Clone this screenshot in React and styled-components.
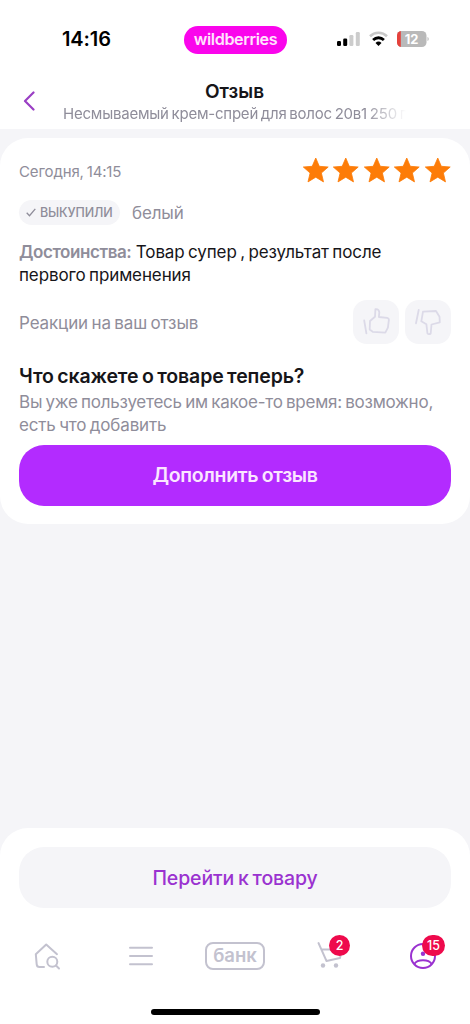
import React from 'react';
import styled, { createGlobalStyle } from 'styled-components';

const GlobalStyle = createGlobalStyle`
  * {
    box-sizing: border-box;
  }
  body {
    margin: 0;
    background: #f5f5f8;
    font-family: Inter, 'Liberation Sans', sans-serif;
    color: #161519;
  }
  button {
    font-family: inherit;
    border: none;
    padding: 0;
  }
`

const Screen = styled.div`
  width: 470px;
  height: 1024px;
  display: flex;
  flex-direction: column;
  overflow: hidden;
  background: #f5f5f8;
`

// Text

const Text = styled.div`
  font-size: ${props => props.$size || 17}px;
  line-height: ${props => props.$line || 23.5}px;
  font-weight: ${props => props.$weight || 400};
  letter-spacing: ${props => props.$spacing || 0}px;
  word-spacing: -1.2px;
  padding-top: ${props => props.$top || 0}px;
  color: ${props => props.$color || '#8f8d9a'};
  white-space: nowrap;
`

// Header

const Top = styled.header`
  height: 129px;
  flex: none;
  background: #fff;
`

const StatusBar = styled.div`
  height: 78px;
  padding: 2px 41px 0 62px;
  display: grid;
  grid-template-columns: 122px 103px 1fr;
  align-items: center;
`

const Pill = styled.div`
  height: 28px;
  border-radius: 14px;
  background: #fa05ec;
  display: flex;
  align-items: center;
  justify-content: center;
`

const StatusIcons = styled.div`
  display: flex;
  align-items: center;
  justify-content: flex-end;
  gap: 9px;
  padding-bottom: 3px;
`

const TitleBar = styled.div`
  display: grid;
  grid-template-columns: 63px 343px 1fr;
  height: 51px;
`

const Back = styled.button`
  background: none;
  display: flex;
  padding: 13px 0 0 22px;
`

const TitleBlock = styled.div`
  display: flex;
  flex-direction: column;
  align-items: center;
  padding-top: 1px;
`

const Subtitle = styled(Text)`
  width: 100%;
  overflow: hidden;
  mask-image: linear-gradient(90deg, #000 88%, transparent 100%);
`

// Review card

const Card = styled.section`
  flex: none;
  height: 386px;
  margin-top: 9px;
  padding: 21px 19px 18px;
  border-radius: 28px;
  background: #fff;
  display: flex;
  flex-direction: column;
`

const Row = styled.div`
  display: flex;
  flex: none;
  align-items: center;
  justify-content: ${props => props.$between ? 'space-between' : 'flex-start'};
  height: ${props => props.$height}px;
  margin-top: ${props => props.$top || 0}px;
  gap: ${props => props.$gap || 0}px;
`

const Chip = styled.div`
  width: 101px;
  height: 25px;
  border-radius: 12.5px;
  background: #f5f5f8;
  display: flex;
  align-items: center;
  gap: 4px;
  padding-left: 7px;
`

const Stars = styled.div`
  display: flex;
  gap: 3px;
  padding-bottom: 2px;
`

const Review = styled(Text)`
  margin-top: 15.5px;
  b {
    font-weight: 600;
    color: #8f8d9a;
    letter-spacing: -0.42px;
    margin-right: 1px;
  }
`

const Reaction = styled.button`
  width: 46px;
  height: 44px;
  border-radius: 14px;
  background: #f5f5f8;
  display: flex;
  align-items: center;
  justify-content: center;
`

const Button = styled.button`
  width: 100%;
  height: 61px;
  border-radius: 25px;
  background: ${props => props.$primary ? '#b32bff' : '#f5f5f8'};
  color: ${props => props.$primary ? '#fbe6ff' : '#9a32d0'};
  font-size: 19.5px;
  font-weight: ${props => props.$primary ? 600 : 500};
  letter-spacing: ${props => props.$spacing || 0}px;
  word-spacing: -1.2px;
  white-space: nowrap;
`

// Bottom

const Bottom = styled.footer`
  margin-top: auto;
  height: 196px;
  flex: none;
  padding-top: 19px;
  border-radius: 28px 28px 0 0;
  background: #fff;
  display: flex;
  flex-direction: column;
  align-items: center;
`

const ButtonWrap = styled.div`
  width: 432px;
`

const Tabs = styled.nav`
  width: 470px;
  height: 96px;
  display: grid;
  grid-template-columns: repeat(5, 1fr);
  justify-items: center;
  align-items: center;
`

const Tab = styled.div`
  position: relative;
  display: flex;
`

const Badge = styled.span`
  position: absolute;
  top: ${props => props.$y}px;
  left: ${props => props.$x}px;
  width: ${props => props.$width}px;
  height: 21px;
  border-radius: 11px;
  background: #ee0a4c;
  color: #fff;
  font-size: 12.5px;
  font-weight: 500;
  line-height: 21px;
  text-align: center;
`

const Bank = styled.div`
  width: 60px;
  height: 28px;
  border: 2px solid #c3c2cf;
  border-radius: 8px;
  display: flex;
  align-items: center;
  justify-content: center;
`

const HomeBar = styled.div`
  width: 169px;
  height: 6px;
  margin-top: 5px;
  border-radius: 3px;
  background: #000;
`

const Signal = () => (
  <svg width="23" height="16" viewBox="0 0 23 16">
    <rect x="0" y="10" width="4" height="5" rx="1.2" fill="#000" />
    <rect x="6.2" y="7.5" width="4" height="7.5" rx="1.2" fill="#000" />
    <rect x="12.4" y="4" width="4" height="11" rx="1.2" fill="#ccc" />
    <rect x="18.8" y="1" width="4" height="14" rx="1.2" fill="#ccc" />
  </svg>
)

const Wifi = () => (
  <svg width="19" height="16" viewBox="0 0 19 16" fill="none">
    <path d="M1 5.2a12.2 12.2 0 0 1 17 0" stroke="#c8c8c8" strokeWidth="2.6" />
    <path d="M4.1 8.9a7.8 7.8 0 0 1 10.8 0" stroke="#000" strokeWidth="2.8" />
    <path d="M9.5 15l-3-3.1a4.3 4.3 0 0 1 6 0z" fill="#000" />
  </svg>
)

const Battery = () => (
  <svg width="32" height="16" viewBox="0 0 32 16">
    <defs>
      <clipPath id="battery">
        <rect width="29.5" height="16" rx="4.6" />
      </clipPath>
    </defs>
    <g clipPath="url(#battery)">
      <rect width="30" height="16" fill="#b9b9b9" />
      <rect width="3.8" height="16" fill="#e5413c" />
    </g>
    <path d="M30.5 6c1.6.5 1.6 3.5 0 4z" fill="#b9b9b9" />
    <text x="14.6" y="12.7" fontSize="13" fontWeight="700" fill="#fff" textAnchor="middle">12</text>
  </svg>
)

const Star = () => (
  <svg width="27.5" height="26" viewBox="0 0 27.5 26">
    <path d="M13.75 1L17.3 9.3 26.2 10 19.4 16 21.5 24.900 13.750 20.200 6 24.900 8.100 16 1.300 10 10.200 9.300z" fill="#fd7c08" stroke="#fd7c08" strokeWidth=".8" strokeLinejoin="round" />
  </svg>
)

const ThumbUp = () => (
  <svg width="28" height="28" viewBox="0 0 28 28" fill="none" stroke="#dcdae8" strokeWidth="1.8" strokeLinejoin="round" strokeLinecap="round">
    <path d="M2.200 12.500l2.200 12.800" />
    <path d="M8 13l5-4.300.4-7.500c2-.2 3.600.8 3.900 3l-.4 4.800 8.200.8c1.300.2 2 1.300 1.700 2.800l-.9 7-2.600 5-12.600-.8L7.700 21.500z" />
  </svg>
)

const ThumbDown = () => (
  <svg width="28" height="28" viewBox="0 0 28 28" fill="none" stroke="#dcdae8" strokeWidth="1.8" strokeLinejoin="round" strokeLinecap="round">
    <path d="M4.700 2L2 15.300" />
    <path d="M9 3.700l13-.7 3.500 5.800.3 5.500-8.300 2.200-.8 9c-1 .9-2.500.8-3.300-.3l-1-8.900-5.100-3z" />
  </svg>
)

const HomeSearch = () => (
  <svg width="28" height="28" viewBox="0 0 28 28" fill="none" stroke="#c3c2cf" strokeWidth="2" strokeLinecap="round" strokeLinejoin="round">
    <path d="M11 25H6.500a2.800 2.800 0 0 1-2.800-2.600L2.800 12.200 13.200 2.500 24 12.200" />
    <circle cx="19.300" cy="19.800" r="5" />
    <path d="M23 23.500l3 3" />
  </svg>
)

const Menu = () => (
  <svg width="24" height="28" viewBox="0 0 24 28" stroke="#c3c2cf" strokeWidth="2" strokeLinecap="round">
    <path d="M1 5.800h22M1 14h22M1 22.200h22" />
  </svg>
)

const Cart = () => (
  <svg width="28" height="28" viewBox="0 0 28 28" fill="none" stroke="#c3c2cf" strokeWidth="1.900" strokeLinecap="round" strokeLinejoin="round">
    <path d="M3.500 1l8 18 13.500-3 2-8.500H6.500" />
    <circle cx="8" cy="23.500" r="2.200" fill="#c3c2cf" stroke="none" />
    <circle cx="21" cy="23.500" r="2.200" fill="#c3c2cf" stroke="none" />
  </svg>
)

const Profile = () => (
  <svg width="28" height="28" viewBox="0 0 28 28" fill="none" stroke="#9a32d0" strokeWidth="2">
    <circle cx="14" cy="14" r="12" />
    <circle cx="14" cy="11.700" r="2.200" fill="#9a32d0" stroke="none" />
    <path d="M5.300 22c3-5 14.400-5 17.400 0" />
  </svg>
)

const App = () => {
  return (
    <Screen>
      <GlobalStyle />
      <Top>
        <StatusBar>
          <Text $size={20} $weight={600} $color="#000" $spacing={-0.1}>14:16</Text>
          <Pill>
            <Text $size={16.2} $weight={600} $color="#ffe3fd" $spacing={-0.4}>wildberries</Text>
          </Pill>
          <StatusIcons>
            <Signal />
            <Wifi />
            <Battery />
          </StatusIcons>
        </StatusBar>
        <TitleBar>
          <Back>
            <svg width="14" height="20" viewBox="0 0 14 20" fill="none" stroke="#9a3fc4" strokeWidth="2.200" strokeLinecap="round" strokeLinejoin="round">
              <path d="M11.500 1.500L3 10l8.500 8.500" />
            </svg>
          </Back>
          <TitleBlock>
            <Text $size={19} $weight={600} $color="#161519" $top={0.5}>Отзыв</Text>
            <Subtitle $size={15} $line={22} $spacing={-0.22}>Несмываемый крем-спрей для волос 20в1 250 г</Subtitle>
          </TitleBlock>
        </TitleBar>
      </Top>

      <Card>
        <Row $between $height={24}>
          <Text $size={15} $spacing={-0.14} $top={2}>Сегодня, 14:15</Text>
          <Stars>
            {[1, 2, 3, 4, 5].map((star) => <Star key={star} />)}
          </Stars>
        </Row>
        <Row $height={25} $top={17} $gap={12}>
          <Chip>
            <svg width="10" height="9" viewBox="0 0 10 9" fill="none" stroke="#8f8d9a" strokeWidth="1.300">
              <path d="M.7 4.800L3.500 7.700 9.300.8" />
            </svg>
            <Text $size={12.5} $weight={500} $spacing={-0.14}>ВЫКУПИЛИ</Text>
          </Chip>
          <Text $spacing={-0.15} $top={2}>белый</Text>
        </Row>
        <Review $color="#161519" $spacing={-0.12}>
          <b>Достоинства:</b> Товар супер , результат после<br />первого применения
        </Review>
        <Row $between $height={44} $top={12.5}>
          <Text $spacing={-0.12} $top={3}>Реакции на ваш отзыв</Text>
          <Row $gap={6}>
            <Reaction><ThumbUp /></Reaction>
            <Reaction><ThumbDown /></Reaction>
          </Row>
        </Row>
        <Row $height={26} $top={20}>
          <Text $size={19.5} $weight={600} $color="#161519" $spacing={-0.14}>Что скажете о товаре теперь?</Text>
        </Row>
        <Text $spacing={-0.24} $top={0.5}>Вы уже пользуетесь им какое-то время: возможно,</Text>
        <Text $spacing={-0.15}>есть что добавить</Text>
        <Row $height={61} $top={7.3}>
          <Button $primary $spacing={-0.32}>Дополнить отзыв</Button>
        </Row>
      </Card>

      <Bottom>
        <ButtonWrap>
          <Button $spacing={-0.13}>Перейти к товару</Button>
        </ButtonWrap>
        <Tabs>
          <Tab><HomeSearch /></Tab>
          <Tab><Menu /></Tab>
          <Tab>
            <Bank>
              <Text $size={18.5} $weight={600} $color="#c3c2cf">банк</Text>
            </Bank>
          </Tab>
          <Tab>
            <Cart />
            <Badge $x={14} $y={-7} $width={21}>2</Badge>
          </Tab>
          <Tab>
            <Profile />
            <Badge $x={13} $y={-7} $width={23}>15</Badge>
          </Tab>
        </Tabs>
        <HomeBar />
      </Bottom>
    </Screen>
  )
}

export default App;
